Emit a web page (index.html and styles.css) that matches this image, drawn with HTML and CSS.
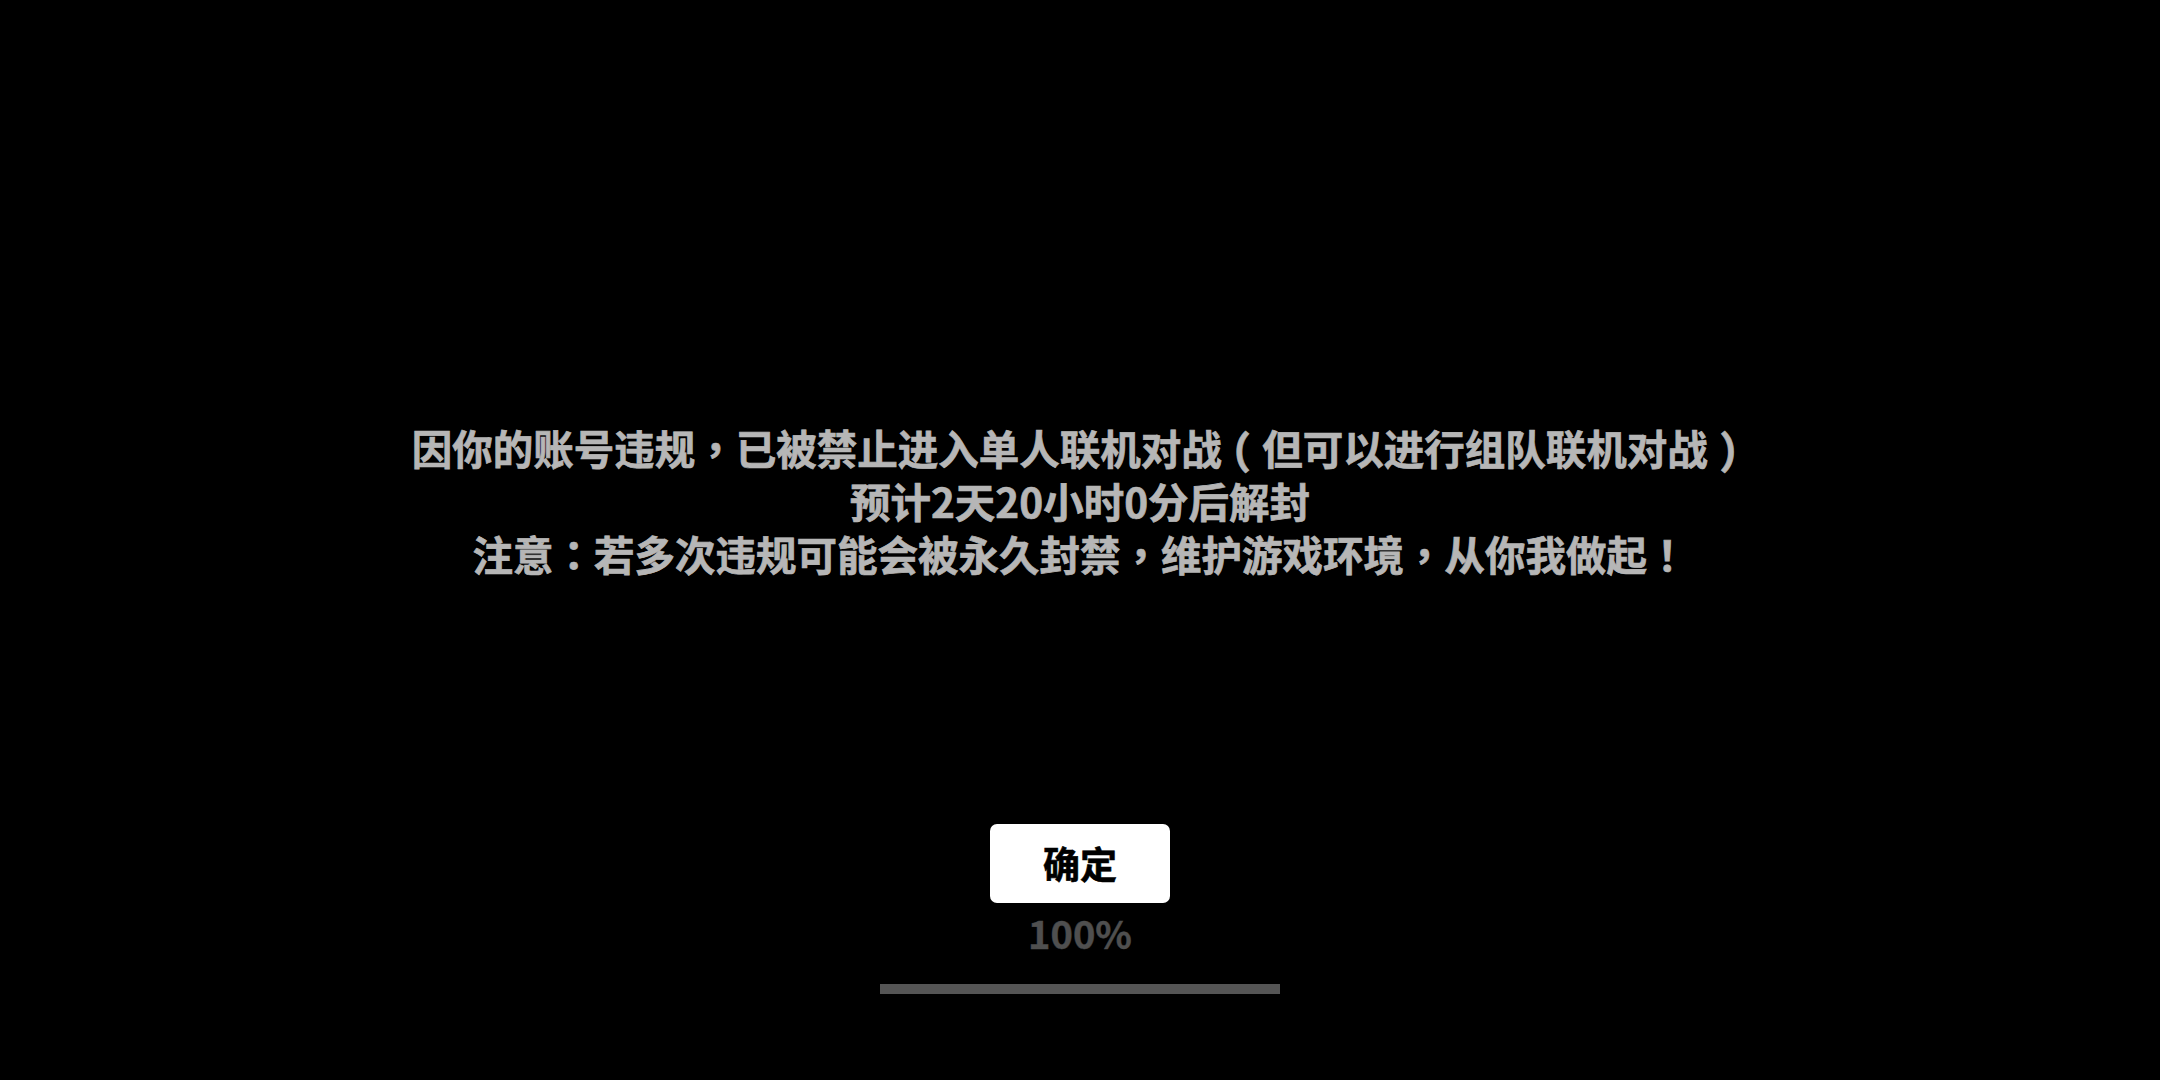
FILE: index.html
```html
<!DOCTYPE html>
<html lang="zh-CN">
<head>
<meta charset="utf-8">
<title>提示</title>
<link rel="stylesheet" href="styles.css">
</head>
<body>
<main class="screen">
  <div class="message">
    <p class="line">因你的账号违规<span class="punct" lang="zh-Hant">，</span>已被禁止进入单人联机对战<span class="punct paren" lang="zh-Hant">（</span>但可以进行组队联机对战<span class="punct paren" lang="zh-Hant">）</span></p>
    <p class="line">预计2天20小时0分后解封</p>
    <p class="line">注意<span class="punct" lang="zh-Hant">：</span>若多次违规可能会被永久封禁<span class="punct" lang="zh-Hant">，</span>维护游戏环境<span class="punct" lang="zh-Hant">，</span>从你我做起<span class="punct" lang="zh-Hant">！</span></p>
  </div>
  <button class="confirm" type="button">确定</button>
  <div class="percent">100%</div>
  <div class="progress"><div class="progress-fill"></div></div>
</main>
</body>
</html>
```

FILE: styles.css
```css
html, body {
  margin: 0;
  padding: 0;
  background: #000;
  width: 100%;
  height: 100%;
  overflow: hidden;
}

.screen {
  display: flex;
  flex-direction: column;
  align-items: center;
  padding-top: 421px;
  font-family: "Noto Sans CJK SC", "Noto Sans", sans-serif;
  font-weight: 700;
}

.message {
  text-align: center;
  color: #b6b6b6;
  font-size: 40.5px;
  line-height: 53px;
  -webkit-text-stroke: 0.7px #b6b6b6;
}

.line {
  margin: 0;
  white-space: nowrap;
  height: 53px;
}

.punct {
  display: inline-block;
  width: 1em;
  height: 53px;
  text-align: center;
  vertical-align: top;
  line-height: 53px;
  font-family: "Noto Sans CJK TC", "Noto Sans CJK SC", sans-serif;
}

.paren {
  font-feature-settings: "hwid" 1;
}

.confirm {
  margin-top: 244px;
  width: 180px;
  height: 79px;
  border: none;
  border-radius: 7px;
  background: #fff;
  color: #000;
  font-family: "Noto Sans CJK SC", "Noto Sans", sans-serif;
  font-weight: 700;
  font-size: 37px;
  line-height: 79px;
  padding: 0;
  -webkit-text-stroke: 0.6px #000;
}

.percent {
  margin-top: 5px;
  color: #4f4f4f;
  font-size: 38px;
  line-height: 50px;
  -webkit-text-stroke: 0.5px #4f4f4f;
}

.progress {
  margin-top: 26px;
  width: 400px;
  height: 10px;
  background: #333;
}

.progress-fill {
  width: 100%;
  height: 100%;
  background: #555;
}
```
